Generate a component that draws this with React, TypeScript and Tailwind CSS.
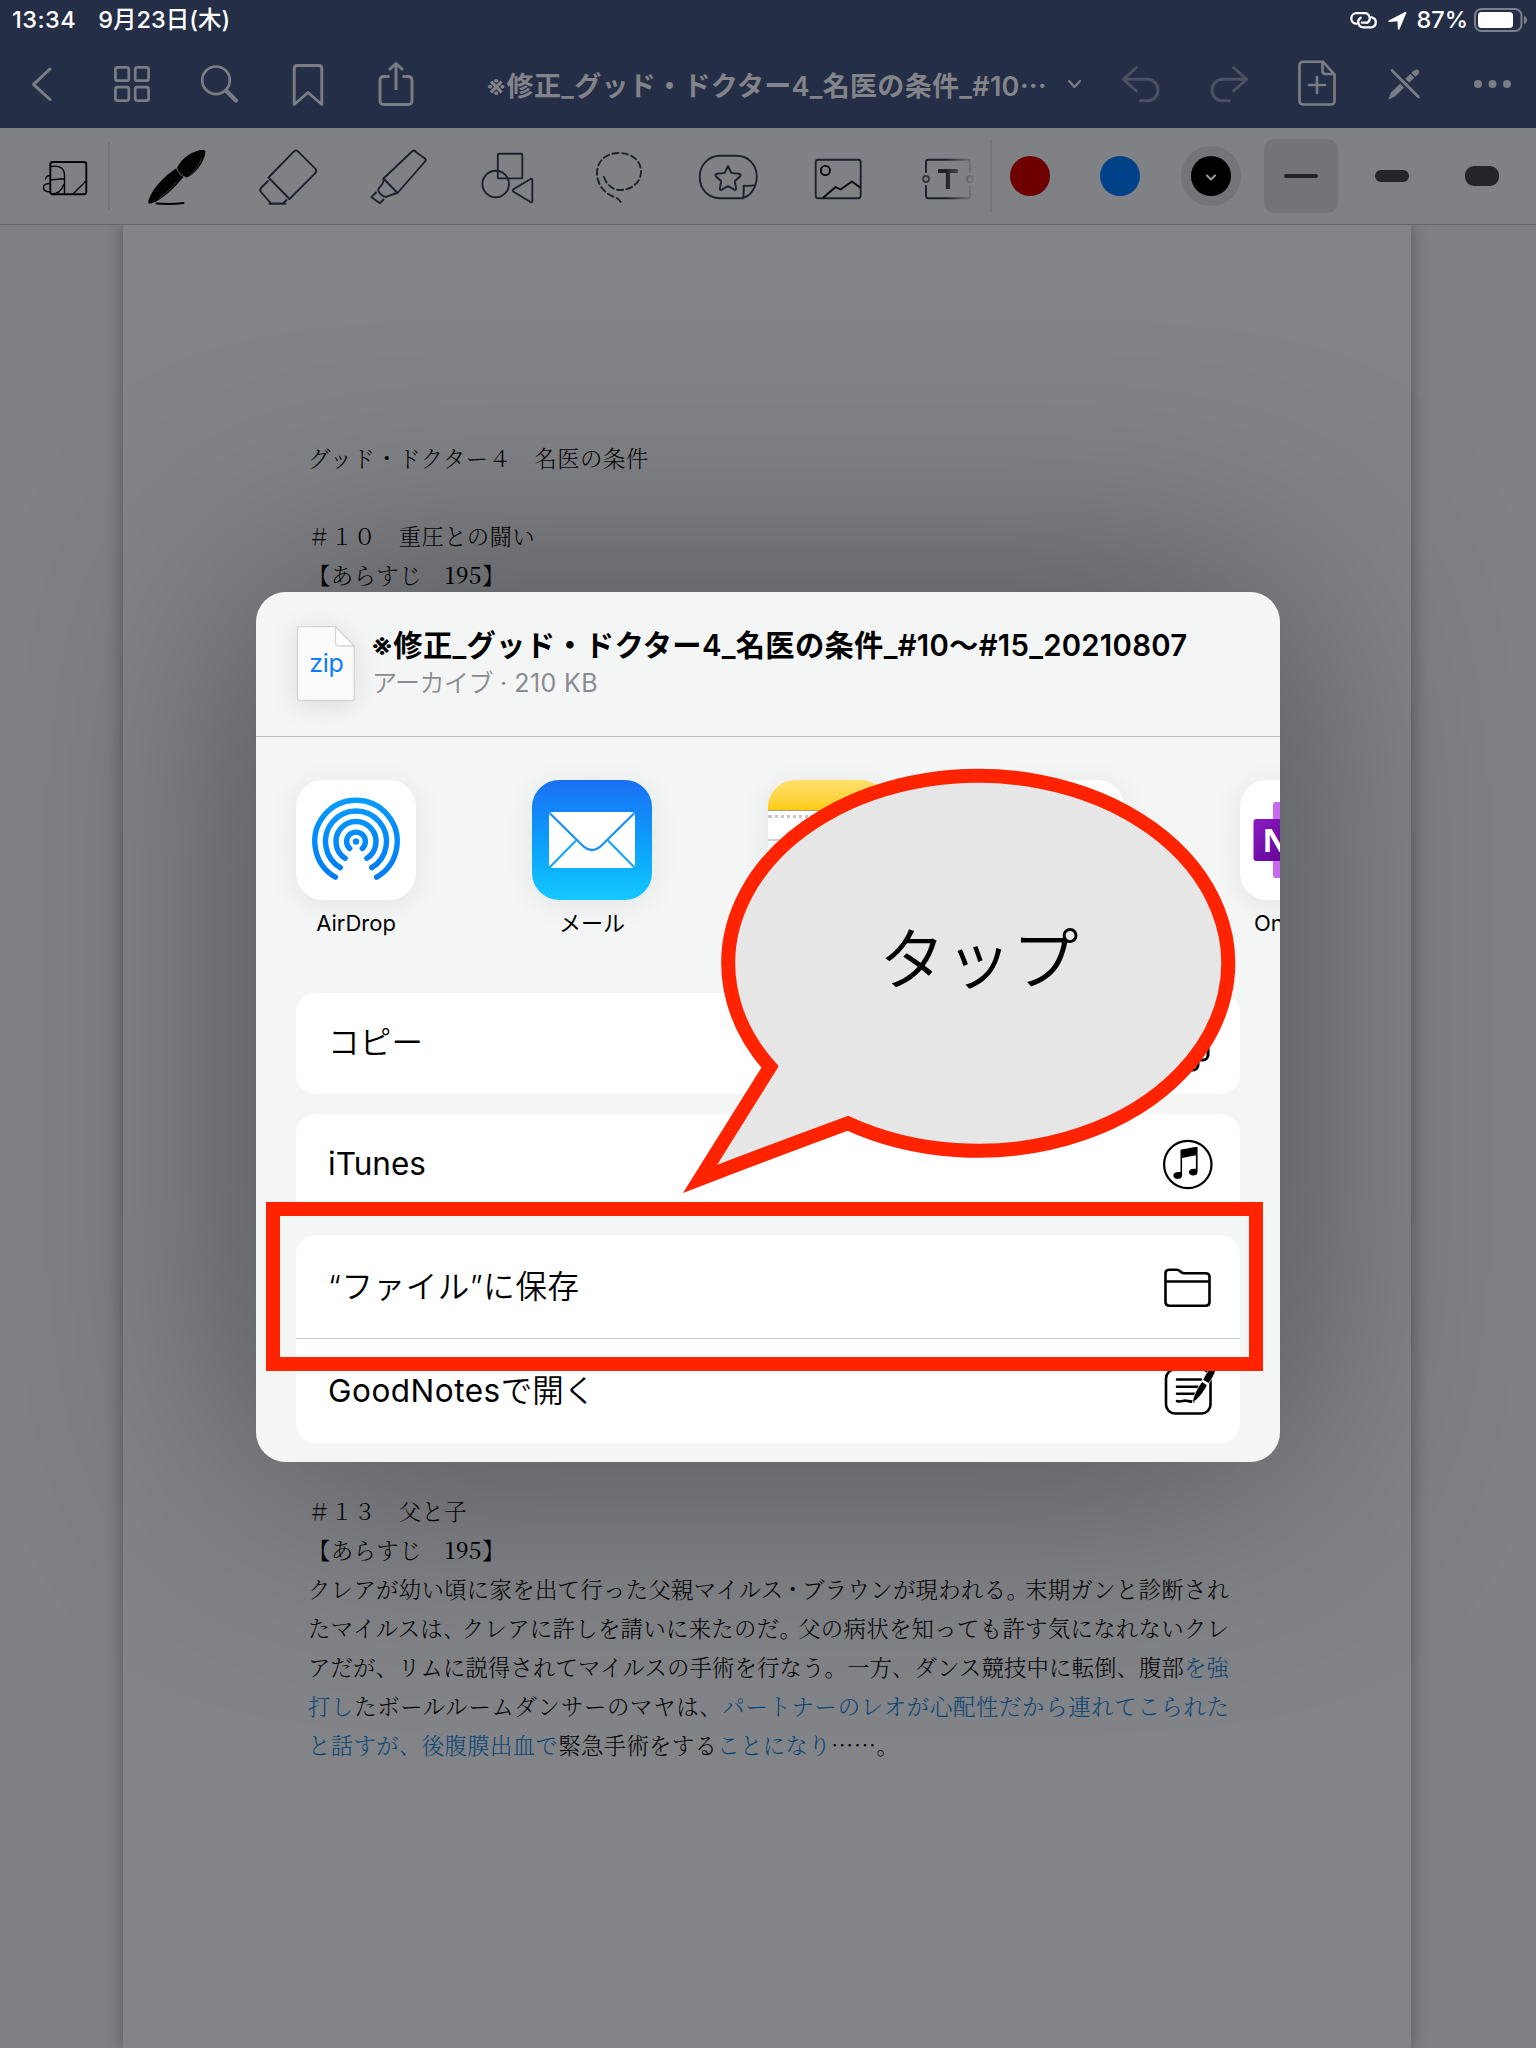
import React from "react";

const UI = "font-['Inter','Noto_Sans_CJK_JP',sans-serif]";

function NavIcon({ x, children, dim }: { x: number; children: React.ReactNode; dim?: boolean }) {
  return (
    <svg
      className={"h-[88px] w-[88px] shrink-0 " + (dim ? "text-[#4a5163]" : "text-[#7b7d84]")}
      viewBox={`${x} 40 88 88`}
      fill="none"
      stroke="currentColor"
      strokeWidth="3"
      strokeLinecap="round"
      strokeLinejoin="round"
    >
      {children}
    </svg>
  );
}

function ToolIcon({ x, children }: { x: number; children: React.ReactNode }) {
  return (
    <svg
      className="h-[96px] w-[110px] shrink-0 text-[#1b212d]"
      viewBox={`${x} 128 110 96`}
      fill="none"
      stroke="currentColor"
      strokeWidth="1.9"
      strokeLinecap="round"
      strokeLinejoin="round"
    >
      {children}
    </svg>
  );
}

function StatusBar() {
  return (
    <div className="flex h-10 items-center justify-between pl-[12px] pr-[8px] text-[23.5px] font-medium leading-none text-white">
      <div className="flex items-center gap-[22px]">
        <span className="tracking-[0.5px]">13:34</span>
        <span className="tracking-[0px]">9月23日(木)</span>
      </div>
      <div className="flex items-center">
        <svg className="mr-[10px] h-[18px] w-[28px]" viewBox="0 0 28 18" fill="none" stroke="white" strokeWidth="2.3" strokeLinecap="round">
          <path d="M7 12.6H6.5a5.2 5.2 0 0 1 0-10.4h8.2a5.2 5.2 0 0 1 2.6 9.6" />
          <path d="M21 6.4h.5a5 5 0 0 1 0 9.9h-8.2a5.2 5.2 0 0 1-2.6-9.6M11.8 11.6h4.6" />
        </svg>
        <svg className="mr-[9px] h-[19px] w-[19px]" viewBox="0 0 19 19" fill="white">
          <path d="M.8 9.6 17 .9c.9-.4 1.6.2 1.3 1.2L11.600 18c-.5 1-1.700.9-1.800-.3L9.500 10.300 1.500 11C.2 11.100-.2 10.200.8 9.600Z" />
        </svg>
        <span className="mr-[6px] tracking-[0px]">87%</span>
        <svg className="h-[24px] w-[54px]" viewBox="0 0 54 24">
          <rect x="1" y="1" width="46.500" height="22" rx="6.500" fill="none" stroke="#7c818d" strokeWidth="2" />
          <rect x="4" y="4" width="35" height="16" rx="3.500" fill="white" />
          <path d="M50 8c4 1 4 7 0 8Z" fill="#7c818d" />
        </svg>
      </div>
    </div>
  );
}

function NavBar() {
  return (
    <div className="flex h-[88px]">
      <NavIcon x={0}>
        <path d="m50 69-16.500 15.300L50 99.500" />
      </NavIcon>
      <NavIcon x={88}>
        <g strokeWidth="2.700">
          <rect x="115.400" y="67.300" width="13.400" height="13.400" rx="2" />
          <rect x="135.200" y="67.300" width="13.400" height="13.400" rx="2" />
          <rect x="115.400" y="87.200" width="13.400" height="13.400" rx="2" />
          <rect x="135.200" y="87.200" width="13.400" height="13.400" rx="2" />
        </g>
      </NavIcon>
      <NavIcon x={176}>
        <circle cx="216" cy="80.300" r="13.800" strokeWidth="2.700" />
        <path d="m226.500 91 9.500 9.500" strokeWidth="4.200" />
      </NavIcon>
      <NavIcon x={264}>
        <path d="M294.200 104.500V68.500q0-3 3-3h21.600q3 0 3 3v36L308 92.500Z" strokeWidth="2.900" />
      </NavIcon>
      <NavIcon x={352}>
        <path d="M389.500 76.500H384q-4 0-4 4v20q0 4 4 4h24q4 0 4-4v-20q0-4-4-4h-5.500M396 90V63.500M389 70l7-6.500 7 6.500" strokeWidth="2.900" strokeLinecap="butt" />
      </NavIcon>
      <div className="flex h-full w-[656px] items-center pl-[46px]">
        <span className="w-[563px] whitespace-nowrap pt-[4px] text-[27px] font-semibold tracking-[0.300px] text-[#828489]">
          ※修正_グッド・ドクター4_名医の条件_#10<span className="font-['Noto_Sans_CJK_JP']">…</span>
        </span>
        <svg className="ml-[18px] h-[10px] w-[15px]" viewBox="0 0 15 10" fill="none" stroke="#7b7d84" strokeWidth="2.300" strokeLinecap="round" strokeLinejoin="round">
          <path d="m2 2 5.500 6L13 2" />
        </svg>
      </div>
      <NavIcon x={1096} dim>
        <path d="M1136.500 67.500 1123.500 79.300l13 11.700M1124 79.300h23.500c6 0 10.500 4.700 10.500 10.700s-4.500 10.700-10.500 10.700h-7" />
      </NavIcon>
      <NavIcon x={1184} dim>
        <path d="M1233.500 67.500 1246.500 79.300l-13 11.700M1246 79.300h-23.500c-6 0-10.500 4.700-10.500 10.700s4.500 10.700 10.500 10.700h7" />
      </NavIcon>
      <NavIcon x={1272}>
        <g strokeWidth="2.600">
          <path d="M1303.500 61.700h19.500l11.500 12.800v26q0 4-4 4h-27q-4 0-4-4V65.700q0-4 4-4ZM1322.500 62v9q0 3 3 3h9" />
          <path d="M1317 77v16M1309 85h16" />
        </g>
      </NavIcon>
      <NavIcon x={1360}>
        <path d="m1388.300 99.800 2.500-7 23-22.300 4 4-23 22Z" fill="currentColor" stroke="none" />
        <path d="m1415.800 73 .9-.9" strokeWidth="5" />
        <path d="m1410.500 73 5 5" stroke="#252e47" strokeWidth="1.600" />
        <path d="m1390 72 27 27M1394 69l27 27" stroke="#252e47" strokeWidth="2.200" />
        <path d="m1392 70.500 26.500 26.500" strokeWidth="2.700" />
      </NavIcon>
      <NavIcon x={1448}>
        <g fill="currentColor" stroke="none">
          <circle cx="1478" cy="84" r="4" />
          <circle cx="1492.500" cy="84" r="4" />
          <circle cx="1507" cy="84" r="4" />
        </g>
      </NavIcon>
    </div>
  );
}

function ToolBar() {
  return (
    <div className="flex h-[97px] border-b border-[#636468] bg-[#808184]">
      <svg className="h-[96px] w-[108px] shrink-0" viewBox="0 128 108 96" fill="none" stroke="#050608" strokeWidth="1.900" strokeLinecap="round" strokeLinejoin="round">
        <rect x="50.300" y="162" width="36" height="32.300" rx="2.500" />
        <path d="M51 166.500c9-1.500 13.500 2 13.500 9V194M51.500 179.700l12.500-.9M63.500 185c-2 6-7 9-12 9M86 181l-13 13" strokeWidth="1.400" />
        <path d="M45.500 179c.5-3 2.500-3.500 5-3.500M50 183.500c-4 0-6.500 1-6.500 4s3 4.500 7 4.500" strokeWidth="1.400" />
      </svg>
      <div className="my-[14px] w-[2px] bg-[#747578]" />
      <div className="relative ml-[13px] flex w-[867px] overflow-hidden">
        <ToolIcon x={123}>
          <g stroke="none" fill="#020304">
            <path d="M148.300 201.500c2.500-11 16-26 28.500-33.500l7.700 7.800c-7 8.700-21.500 24.500-33.500 27.700-2 .5-3.300-.5-2.700-2Z" />
            <path d="M177.300 167.300c4-9 16.500-17.300 25.700-17.300 2.500 0 2.700 1.500 2 4.500-2 9-9.500 19.500-18.500 23-4.500-1-8.500-5.200-9.200-10.200Z" />
          </g>
          <path d="M156.500 203.500c10 .8 19 .6 27-.5" stroke="#020304" strokeWidth="2" />
          <path d="M176.600 168.500c1.500 4 4.500 7.500 8.600 8.800" stroke="#77787b" strokeWidth="0.900" />
          <path d="M190 175c5-4 10-11 11.500-17M176 182c-6 8-12 13-17 16" stroke="#242529" strokeWidth="1.200" />
        </ToolIcon>
        <ToolIcon x={233}>
          <path d="m268.500 177.500 25-25.700q2.500-2.500 5 0l16.500 16.500q2.500 2.500 0 5L289.500 199Z" />
          <path d="m268 181-6.500 6.500q-2.500 2.500-.5 4.500l10 11.500H283l3.500-3.500M269.500 203.700H285.500" />
        </ToolIcon>
        <ToolIcon x={343}>
          <path d="m414.500 151 10.500 7.500q1.500 1.500 0 3L397.500 193l-14-14.500 29-27.500q1.500-1 3 0" />
          <path d="M383.500 179c1 5-4 7-5.500 11 1 3 5 7 8 7 3-1 7-3 11.500-4M376 192.500l-4.500 4.700 8.500 6 3.500-3.700" />
        </ToolIcon>
        <ToolIcon x={453}>
          <circle cx="495.700" cy="184" r="13.300" />
          <rect x="497.800" y="153.800" width="24.500" height="24.600" rx="1" />
          <path d="m513.500 189.300 17-10.300q1.800-.8 1.800 1v21q0 2-1.800 1l-17-10.300q-1.500-1.200 0-2.400Z" />
        </ToolIcon>
        <ToolIcon x={563}>
          <path strokeDasharray="6 3.500" d="M604 177c3 8.500 9 13 16 13 12 0 21-8 21-18.500S632 153 619 153s-22 8-22 20c0 10.500 6.500 19.500 15 23 5 2 8 3 9 7.500" />
        </ToolIcon>
        <ToolIcon x={673}>
          <path d="M743 198.200h-23c-12 0-20.300-9-20.300-21.200 0-12.200 9-21.200 20.300-21.200h16.500c12 0 20.300 9 20.300 21.200 0 3-.5 5.500-1.500 8-2 6.500-6 11-12.300 13.200ZM743 198c1-4 .7-8 .7-12.300 4 .3 7.800.3 11.600-.6" />
          <path d="m728 166 3.300 6.900 7.800.9c1.500.2 1.900 1.400.9 2.500l-5.200 4.900 1.300 7.200c.2 1.400-.9 1.900-1.900 1.300l-6.200-3.500-6.200 3.500c-1 .6-2.100.1-1.900-1.300l1.300-7.200-5.200-4.900c-1-1.100-.6-2.300.9-2.500l7.800-.9 3.300-6.900Z" />
        </ToolIcon>
        <ToolIcon x={783}>
          <rect x="815.700" y="159.700" width="45" height="38.600" rx="2.500" />
          <g stroke="#050608">
            <circle cx="825.400" cy="170.500" r="4.600" />
            <path d="m823.500 197.500 12-10.500 5 2.500L852 181.500l8 6" />
          </g>
        </ToolIcon>
        <ToolIcon x={893}>
          <path d="M926 172v-10q0-2.300 2.300-2.300h39.500q2.300 0 2.300 2.300v10M926 186v10q0 2.300 2.300 2.300h39.500q2.300 0 2.300-2.300v-10" />
          <circle cx="926" cy="179" r="3" stroke="#34373d" strokeWidth="1.800" />
          <circle cx="970" cy="179" r="3" />
          <path d="M938 171h20M948 171v18" stroke="#202226" strokeWidth="4.200" strokeLinecap="butt" />
        </ToolIcon>
        <div className="absolute inset-y-0 right-[14px] w-[30px] bg-linear-to-r from-[#808184]/0 to-[#808184]" />
      </div>
      <div className="my-[12px] w-[2px] bg-[#747578]" />
      <div className="flex items-center pl-[18px]">
        <div className="h-10 w-10 rounded-full bg-[#6f0000]" />
        <div className="ml-[50px] h-10 w-10 rounded-full bg-[#004289]" />
        <div className="ml-[41px] flex h-[60px] w-[60px] items-center justify-center rounded-full bg-[#747578]">
          <div className="flex h-10 w-10 items-center justify-center rounded-full bg-black">
            <svg className="mt-[3px] h-[8px] w-[12px]" viewBox="0 0 12 8" fill="none" stroke="#999b9f" strokeWidth="2" strokeLinecap="round" strokeLinejoin="round">
              <path d="m2 1.500 4 4 4-4" />
            </svg>
          </div>
        </div>
        <div className="ml-[23px] flex h-[74px] w-[74px] items-center justify-center rounded-[10px] bg-[#737478]">
          <div className="h-[4px] w-[34px] rounded-full bg-[#232529]" />
        </div>
        <div className="ml-[37px] h-[12px] w-[34px] rounded-full bg-[#232529]" />
        <div className="ml-[56px] h-[20px] w-[34px] rounded-[9px] bg-[#232529]" />
      </div>
    </div>
  );
}

function Line({ children, full }: { children?: React.ReactNode; full?: boolean }) {
  return (
    <p className={"h-[39px] whitespace-nowrap leading-[39px] " + (full ? "w-[921px] [text-align-last:justify]" : "")}>
      {children}
    </p>
  );
}

function Blue({ children }: { children: React.ReactNode }) {
  return <span className="text-[#0c4675]">{children}</span>;
}

/* Punctuation set tighter than a full em. */
function Tight({ children }: { children: React.ReactNode }) {
  return <span className="-mr-[4px]">{children}</span>;
}

function Document() {
  return (
    <div className="flex h-[1823px] justify-center overflow-hidden bg-[#808185] pr-[2px]">
      <div className="h-full w-[1288px] bg-[#838488] pl-[185px] pt-[213px] text-[22.400px] font-light text-[#030406] shadow-[0_0_16px_1px_rgba(0,0,0,0.300)] [font-family:'Noto_Serif_CJK_JP','Liberation_Serif','Noto_Sans_CJK_JP',serif]">
        <Line><span className="tracking-[0.450px]">グッド・ドクター４　名医の条件</span></Line>
        <Line />
        <Line><span className="tracking-[0.300px]">＃１０　重圧との闘い</span></Line>
        <Line><span className="tracking-[0.400px]">【あらすじ　<span className="font-medium">195</span>】</span></Line>
        <div className="h-[897px]" />
        <Line><span className="tracking-[0.300px]">＃１３　父と子</span></Line>
        <Line><span className="tracking-[0.400px]">【あらすじ　<span className="font-medium">195</span>】</span></Line>
        <Line full>クレアが幼い頃に家を出て行った父親マイルス<span className="-mx-[2px]">・</span>ブラウンが現われる<Tight>。</Tight>末期ガンと診断され</Line>
        <Line full>たマイルスは<Tight>、</Tight>クレアに許しを請いに来たのだ<Tight>。</Tight>父の病状を知っても許す気になれないクレ</Line>
        <Line full>アだが、リムに説得されてマイルスの手術を行なう。一方、ダンス競技中に転倒、腹部<Blue>を強</Blue></Line>
        <Line full><Blue>打し</Blue>たボールルームダンサーのマヤは、<Blue>パートナーのレオが心配性だから連れてこられた</Blue></Line>
        <Line><span className="tracking-[0.350px]"><Blue>と話すが、後腹膜出血で</Blue>緊急手術をする<Blue>ことになり</Blue><span className="font-['Noto_Sans_CJK_JP']">……</span>。</span></Line>
      </div>
    </div>
  );
}

function AppTile({ label, tile, children }: { label?: string; tile: string; children?: React.ReactNode }) {
  return (
    <div className="flex w-[120px] shrink-0 flex-col items-center">
      <div className={"h-[120px] w-[120px] overflow-hidden rounded-[27px] shadow-[0_4px_30px_rgba(0,0,0,0.070)] " + tile}>{children}</div>
      {label && <span className="mt-[10px] whitespace-nowrap text-[22px] leading-[26px] text-black">{label}</span>}
    </div>
  );
}

function ring(r: number, half: number) {
  const a = (half * Math.PI) / 180;
  const dx = r * Math.sin(a);
  const dy = r * Math.cos(a);
  return `M${60 - dx} ${61.5 + dy}A${r} ${r} 0 1 1 ${60 + dx} ${61.5 + dy}`;
}

function Row({ label, height, icon }: { label: React.ReactNode; height: string; icon: React.ReactNode }) {
  return (
    <div className={"flex items-center justify-between pl-[32px] pr-[23px] text-[31.500px] text-black " + height}>
      <span className="whitespace-nowrap pb-[1px] leading-none">{label}</span>
      {icon}
    </div>
  );
}

const ICON = "h-[60px] w-[60px] shrink-0";

function ShareSheet() {
  return (
    <div className="absolute left-[256px] top-[592px] h-[870px] w-[1024px] overflow-hidden rounded-[30px] bg-[#f4f6f6]">
      <div className="flex h-[145px] border-b border-[#bdbebf] pl-[40px] pt-[33px]">
        <div className="relative flex h-[78px] w-[60px] items-center justify-center">
          <svg className="absolute inset-0 h-[78px] w-[60px] overflow-visible drop-shadow-[0_4px_12px_rgba(0,0,0,0.100)]" viewBox="0 0 60 78" fill="#fbfbfb" stroke="#d3d4d5" strokeWidth="1.300" strokeLinejoin="round">
            <path d="M3.500 1.600h36L58.200 21v52.500q0 2-2 2H3.500q-2 0-2-2v-70q0-1.900 2-1.900Z" />
            <path d="M39.500 1.600V17q0 4 4 4h14.700Z" fill="white" />
          </svg>
          <span className="relative -mt-[1px] ml-[1px] text-[25px] leading-none tracking-[-0.300px] text-[#0a7cff]">zip</span>
        </div>
        <div className="ml-[15px] flex flex-col whitespace-nowrap pt-[2px]">
          <span className="text-[29.300px] font-semibold leading-[38px] tracking-[0.280px] text-black">※修正_グッド・ドクター4_名医の条件_#10〜#15_20210807</span>
          <span className="pl-[1px] text-[25px] leading-[36px] text-[#8b8b8f]"><span className="font-[350] tracking-[-0.500px]">アーカイブ</span> · <span className="tracking-[0.400px]">210 KB</span></span>
        </div>
      </div>
      <div className="flex h-[256px] gap-[116px] pl-[40px] pt-[43px]">
        <AppTile label="AirDrop" tile="bg-white">
          <svg className="h-full w-full" viewBox="0 0 120 120" fill="none" stroke="url(#drop)" strokeWidth="5.400" strokeLinecap="round">
            <defs>
              <linearGradient id="drop" x1="0" y1="18" x2="0" y2="100" gradientUnits="userSpaceOnUse">
                <stop stopColor="#059cff" />
                <stop offset="1" stopColor="#007af8" />
              </linearGradient>
            </defs>
            <circle cx="60" cy="61.500" r="3.200" fill="#068aff" stroke="none" />
            <path d={ring(9.400, 42)} />
            <path d={ring(20, 33)} />
            <path d={ring(30.500, 31)} />
            <path d={ring(41.200, 30)} />
          </svg>
        </AppTile>
        <AppTile label="メール" tile="bg-linear-to-b from-[#1b6ef3] to-[#15c8fe]">
          <svg className="h-full w-full" viewBox="0 0 120 120">
            <rect x="17" y="32" width="86" height="56" rx="4" fill="white" />
            <g fill="none" stroke="#188ff6" strokeWidth="2.200">
              <path d="M18 33.500 50.500 65.500q9.500 9 19 0L102 33.500" />
              <path d="M18 87 44 60.500M102 87 76 60.500" stroke="#17a7fa" />
            </g>
          </svg>
        </AppTile>
        <AppTile tile="bg-white">
          <div className="h-[31px] border-b border-[#a99f84] bg-linear-to-b from-[#ffe06a] to-[#ffcc00]" />
          <div className="mt-[4px] border-t-[3px] border-dotted border-[#c8c8ca]" />
          <div className="mt-[21px] h-[2px] bg-[#cfcfd1]" />
        </AppTile>
        <AppTile tile="bg-white" />
        <AppTile label="OneNote" tile="bg-white">
          <svg className="h-full w-full" viewBox="0 0 120 120">
            <defs>
              <linearGradient id="note" x1="0" y1="0" x2="1" y2="1">
                <stop stopColor="#8b1cc0" />
                <stop offset="1" stopColor="#5d0090" />
              </linearGradient>
            </defs>
            <rect x="33" y="22" width="66" height="76" rx="3" fill="#cb66ee" />
            <rect x="13.500" y="39" width="42" height="42" rx="3" fill="url(#note)" />
            <text x="22.500" y="71.500" fontSize="32" fontWeight="700" fill="white" fontFamily="Open Sans">N</text>
          </svg>
        </AppTile>
      </div>
      <div className="mx-[40px] rounded-[20px] bg-white">
        <Row
          height="h-[101px]"
          label={<span className="font-[350] tracking-[0.300px]">コピー</span>}
          icon={
            <svg className={ICON} viewBox="0 0 60 60" fill="white" stroke="black" strokeWidth="3">
              <rect x="16" y="4" width="35" height="42" rx="5" />
              <rect x="6" y="14" width="35" height="42" rx="5" />
            </svg>
          }
        />
      </div>
      <div className="mx-[40px] mt-[20px] rounded-[20px] bg-white">
        <Row
          height="h-[101px]"
          label="iTunes"
          icon={
            <svg className={ICON + " -translate-y-px"} viewBox="0 0 60 60">
              <circle cx="30.800" cy="30.500" r="23.700" fill="none" stroke="black" strokeWidth="2.200" />
              <path d="M23.500 16.600q0-.9.900-1.100l15.200-2.700q1-.2 1 .8v24c0 3-2 4-4.300 4-2.500 0-4.300-1.300-4.300-3.300 0-3 3-3.600 6.900-3.500V21.200L25.100 24v17c0 3-2 3.800-4.300 3.800-2.500 0-4.400-1.300-4.400-3.400 0-3 3.200-3.600 7.100-3.500Z" fill="black" />
            </svg>
          }
        />
      </div>
      <div className="mx-[40px] mt-[20px] rounded-[20px] bg-white">
        <Row
          height="h-[103px]"
          label={<span className="font-['Noto_Sans_CJK_JP'] font-[350] tracking-[0.600px]"><span className="font-['Inter']">“</span>ファイル<span className="font-['Inter']">”</span>に保存</span>}
          icon={
            <svg className={ICON} viewBox="0 0 60 60" fill="none" stroke="black" strokeWidth="2.600" strokeLinejoin="round">
              <path d="M8.500 16.500q0-3.800 3.800-3.800h7.500q1.700 0 3 1.200l1.500 1.300q1.200 1 3 1h21.400q3.800 0 3.800 3.800v25q0 3.700-3.800 3.700H12.300q-3.800 0-3.800-3.700ZM8.500 24.500h44" />
            </svg>
          }
        />
        <div className="h-px bg-[#c6c6c8]" />
        <Row
          height="h-[104px]"
          label={<span><span className="tracking-[0.500px]">GoodNotes</span><span className="font-[350]">で開く</span></span>}
          icon={
            <svg className={ICON} viewBox="0 0 60 60" fill="none" stroke="black" strokeWidth="2.600" strokeLinecap="round">
              <rect x="9" y="8.500" width="44.500" height="44" rx="9" />
              <path d="M20 18.500h24M20 25.700h21M20 32.800h18M20 40c4 1.700 6-1 9.500-.3 3 .6 4.500 1.300 7 .8" />
              <path d="M35.500 41.500c.3-6 5.500-16.500 9.700-20.800l5 3.200C47.500 30 41 39 35.500 41.500ZM45.800 18.800c2-4 4-7.500 6.500-10h6.500c-1 4.500-4 9.500-7 13.500Z" fill="black" stroke="white" strokeWidth="0.800" />
            </svg>
          }
        />
      </div>
    </div>
  );
}

function Annotations() {
  return (
    <>
      <div className="absolute left-[266px] top-[1202px] h-[169px] w-[997px] border-[14px] border-[#ff2300]" />
      <div className="absolute left-[676px] top-[764px] h-[436px] w-[566px]">
        <svg className="absolute inset-0 h-full w-full" viewBox="676 764 566 436">
          <path d="M770 1067A250 187.500 0 1 1 848 1123.300Q770 1152 700 1179Z" fill="#e6e6e6" stroke="#ff2300" strokeWidth="14" strokeLinejoin="miter" strokeMiterlimit="8" />
        </svg>
        <span className="absolute left-[203px] top-[158px] whitespace-nowrap text-[66.500px] font-[350] leading-[66px] text-black [font-family:'Noto_Sans_CJK_JP',sans-serif]">タップ</span>
      </div>
    </>
  );
}

export default function App() {
  return (
    <div lang="ja" className={"relative h-[2048px] w-[1536px] overflow-hidden bg-[#808185] " + UI}>
      <header className="bg-[#252e47]">
        <StatusBar />
        <NavBar />
      </header>
      <ToolBar />
      <Document />
      <div className="absolute inset-x-0 bottom-0 top-[225px] overflow-hidden">
        <div className="absolute left-[256px] top-[367px] h-[870px] w-[1024px] rounded-[30px] shadow-[0_0_240px_8px_rgba(0,0,0,0.380)]" />
      </div>
      <ShareSheet />
      <Annotations />
    </div>
  );
}
